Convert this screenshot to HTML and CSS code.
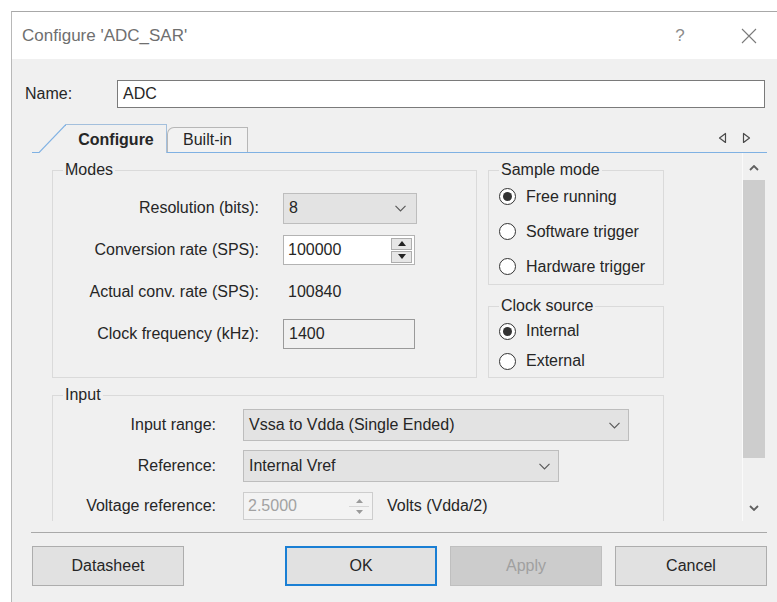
FILE: index.html
```html
<!DOCTYPE html>
<html lang="en">
<head>
<meta charset="utf-8">
<title>Configure 'ADC_SAR'</title>
<link rel="stylesheet" href="styles.css">
</head>
<body>
<div class="dialog">
  <header class="titlebar">
    <span class="title">Configure 'ADC_SAR'</span>
    <span class="help">?</span>
    <span class="close">
      <svg width="16" height="16" viewBox="0 0 16 16"><path d="M1 1 L15 15 M15 1 L1 15" stroke="#7a7a7a" stroke-width="1.1" fill="none"/></svg>
    </span>
  </header>

  <main class="panel">
    <div class="name-row">
      <span class="name-label">Name:</span>
      <div class="textbox name-box">ADC</div>
    </div>

    <div class="tabstrip">
      <div class="tab tab-active">
        <svg class="tab-slant" width="27" height="29" viewBox="0 0 27 29"><polygon points="0,29 27,0 27,29" fill="#f0f0f0"/><path d="M0 28.5 L27 0.5" stroke="#7fb1e3" stroke-width="1.2" fill="none"/></svg>
        <span class="tab-label">Configure</span>
      </div>
      <div class="tab tab-plain"><span class="tab-label">Built-in</span></div>
      <div class="tab-nav">
        <svg width="36" height="12" viewBox="0 0 36 12"><path d="M10.5 1.5 L10.5 10.5 L4.5 6 Z" stroke="#4a4a4a" stroke-width="1.2" fill="none" stroke-linejoin="round"/><path d="M28.5 1.5 L28.5 10.5 L34.5 6 Z" stroke="#4a4a4a" stroke-width="1.2" fill="none" stroke-linejoin="round"/></svg>
      </div>
    </div>

    <div class="pane">
      <div class="pane-content">
        <div class="groups">
          <fieldset class="group">
            <legend>Modes</legend>
            <div class="form modes-form">
              <span class="field-label">Resolution (bits):</span>
              <div class="combo combo-res"><span>8</span>
                <svg width="11" height="7" viewBox="0 0 11 7"><path d="M0.5 0.8 L5.5 5.8 L10.5 0.8" stroke="#5a5a5a" stroke-width="1.2" fill="none"/></svg>
              </div>

              <span class="field-label">Conversion rate (SPS):</span>
              <div class="spin spin-rate">
                <span class="spin-value">100000</span>
                <span class="spin-buttons">
                  <span class="spin-btn"><svg width="8" height="5" viewBox="0 0 8 5"><polygon points="0,5 8,5 4,0" fill="#222"/></svg></span>
                  <span class="spin-btn"><svg width="8" height="5" viewBox="0 0 8 5"><polygon points="0,0 8,0 4,5" fill="#222"/></svg></span>
                </span>
              </div>

              <span class="field-label">Actual conv. rate (SPS):</span>
              <span class="static-value">100840</span>

              <span class="field-label">Clock frequency (kHz):</span>
              <div class="textbox readonly-box">1400</div>
            </div>
          </fieldset>

          <div class="side">
            <fieldset class="group">
              <legend>Sample mode</legend>
              <div class="radios sample-radios">
                <div class="radio-row"><span class="radio checked"><span class="dot"></span></span>Free running</div>
                <div class="radio-row"><span class="radio"></span>Software trigger</div>
                <div class="radio-row"><span class="radio"></span>Hardware trigger</div>
              </div>
            </fieldset>
            <fieldset class="group">
              <legend>Clock source</legend>
              <div class="radios clock-radios">
                <div class="radio-row"><span class="radio checked"><span class="dot"></span></span>Internal</div>
                <div class="radio-row"><span class="radio"></span>External</div>
              </div>
            </fieldset>
          </div>

          <fieldset class="group group-wide">
            <legend>Input</legend>
            <div class="form input-form">
              <span class="field-label">Input range:</span>
              <div class="combo combo-range"><span>Vssa to Vdda (Single Ended)</span>
                <svg width="11" height="7" viewBox="0 0 11 7"><path d="M0.5 0.8 L5.5 5.8 L10.5 0.8" stroke="#5a5a5a" stroke-width="1.2" fill="none"/></svg>
              </div>

              <span class="field-label">Reference:</span>
              <div class="combo combo-ref"><span>Internal Vref</span>
                <svg width="11" height="7" viewBox="0 0 11 7"><path d="M0.5 0.8 L5.5 5.8 L10.5 0.8" stroke="#5a5a5a" stroke-width="1.2" fill="none"/></svg>
              </div>

              <span class="field-label">Voltage reference:</span>
              <div class="vref-row">
                <div class="spin spin-disabled">
                  <span class="spin-value">2.5000</span>
                  <span class="spin-buttons">
                    <span class="spin-btn"><svg width="7" height="4" viewBox="0 0 7 4"><polygon points="0,4 7,4 3.5,0" fill="#9a9a9a"/></svg></span>
                    <span class="spin-btn"><svg width="7" height="4" viewBox="0 0 7 4"><polygon points="0,0 7,0 3.5,4" fill="#9a9a9a"/></svg></span>
                  </span>
                </div>
                <span class="unit">Volts (Vdda/2)</span>
              </div>
            </div>
          </fieldset>
        </div>
      </div>

      <div class="scrollbar">
        <span class="sb-btn sb-up"><svg width="10" height="6" viewBox="0 0 10 6"><path d="M1 5 L5 1 L9 5" stroke="#606060" stroke-width="1.8" fill="none"/></svg></span>
        <span class="sb-thumb"></span>
        <span class="sb-track"></span>
        <span class="sb-btn sb-down"><svg width="10" height="6" viewBox="0 0 10 6"><path d="M1 1 L5 5 L9 1" stroke="#606060" stroke-width="1.8" fill="none"/></svg></span>
      </div>
    </div>

    <div class="separator"></div>

    <div class="buttons">
      <button class="btn btn-left">Datasheet</button>
      <button class="btn btn-default">OK</button>
      <button class="btn btn-disabled">Apply</button>
      <button class="btn">Cancel</button>
    </div>
  </main>
</div>
</body>
</html>
```

FILE: styles.css
```css
* { box-sizing: border-box; }

html, body { margin: 0; padding: 0; }

body {
  width: 777px;
  height: 602px;
  overflow: hidden;
  background: #ffffff;
  font-family: "Liberation Sans", Arial, sans-serif;
  font-size: 16px;
  color: #262626;
}

/* window frame */
.dialog {
  margin: 11px 0 0 11px;
  height: 591px;
  border-top: 1px solid #a8a8a8;
  border-left: 1px solid #b8b8b8;
  display: flex;
  flex-direction: column;
  overflow: hidden;
}

.titlebar {
  flex: none;
  height: 47px;
  background: #ffffff;
  display: flex;
  align-items: center;
  padding: 0 18px 0 10px;
}

.title { font-size: 17px; color: #6f6f6f; }

.help {
  margin-left: auto;
  width: 20px;
  text-align: center;
  font-size: 17px;
  color: #8c8c8c;
}

.close {
  margin-left: 49px;
  width: 20px;
  height: 20px;
  display: flex;
  align-items: center;
  justify-content: center;
}

.panel {
  flex: 1;
  background: #f0f0f0;
  display: flex;
  flex-direction: column;
}

/* name */
.name-row {
  margin: 21px 0 0 13px;
  display: flex;
  align-items: center;
  height: 28px;
}

.name-label { width: 92px; }

.textbox {
  height: 28px;
  border: 1px solid #7a7a7a;
  background: #ffffff;
  padding-left: 5px;
  line-height: 26px;
}

.name-box { width: 648px; }

/* tabs */
.tabstrip {
  margin: 16px 0 0 20px;
  width: 735px;
  height: 29px;
  display: flex;
  align-items: flex-end;
  border-bottom: 1px solid #7fb1e3;
  padding-left: 7px;
}

.tab { display: flex; }

.tab-active {
  height: 29px;
  margin-bottom: -1px;
}

.tab-slant { flex: none; display: block; }

.tab-active .tab-label {
  width: 101px;
  background: #f0f0f0;
  border-top: 1px solid #a3bfdc;
  border-right: 1px solid #a3bfdc;
  font-weight: bold;
  display: flex;
  align-items: center;
  justify-content: center;
  padding-top: 1px;
}

.tab-plain {
  width: 81px;
  height: 25px;
  border: 1px solid #b7b7b7;
  border-bottom: none;
  border-top-left-radius: 7px;
  background: #f2f2f2;
  align-items: center;
  justify-content: center;
}

.tab-nav {
  margin-left: auto;
  margin-right: 16px;
  align-self: center;
  display: flex;
}

/* scrolling page */
.pane {
  margin-left: 20px;
  width: 735px;
  height: 368px;
  display: flex;
}

.pane-content {
  flex: 1;
  overflow: hidden;
  padding: 8px 0 0 20px;
}

.groups {
  display: grid;
  grid-template-columns: 425px 176px;
  column-gap: 11px;
  row-gap: 8px;
  align-items: start;
}

.group-wide { grid-column: 1 / 3; }

.side {
  display: flex;
  flex-direction: column;
  gap: 12px;
}

fieldset.group {
  margin: 0;
  padding: 0;
  min-width: 0;
  border: 1px solid #dadada;
}

legend {
  margin-left: 10px;
  padding: 0 2px;
  line-height: 18px;
}

.form {
  display: grid;
  align-items: center;
  column-gap: 24px;
}

.field-label {
  justify-self: end;
  text-align: right;
  white-space: nowrap;
}

.modes-form {
  grid-template-columns: 206px 134px;
  grid-auto-rows: 42px;
  padding: 8px 0 22px 0;
}

.input-form {
  grid-template-columns: 163px auto;
  column-gap: 27px;
  grid-template-rows: 32px 32px 30px;
  row-gap: 9px;
  padding: 5px 0 12px 0;
  justify-items: start;
}

.input-form .field-label { justify-self: end; }

.combo {
  display: flex;
  align-items: center;
  justify-content: space-between;
  background: #e3e3e3;
  border: 1px solid #bdbdbd;
  padding: 0 10px 0 5px;
}

.combo svg { display: block; }

.combo-res { width: 134px; height: 31px; }
.combo-range { width: 386px; height: 32px; padding-right: 8px; }
.combo-ref { width: 316px; height: 32px; padding-right: 8px; }

.spin {
  display: flex;
  border: 1px solid #b3b3b3;
  background: #ffffff;
}

.spin-value {
  flex: 1;
  display: flex;
  align-items: center;
  padding-left: 4px;
}

.spin-buttons {
  display: flex;
  flex-direction: column;
  justify-content: center;
  gap: 1px;
  padding: 1px 2px 1px 1px;
}

.spin-btn {
  display: flex;
  align-items: center;
  justify-content: center;
}

.spin-rate { width: 132px; height: 30px; }

.spin-rate .spin-btn {
  width: 21px;
  height: 12px;
  background: #e6e6e6;
  border: 1px solid #adadad;
}

.spin-disabled {
  width: 130px;
  height: 28px;
  background: #f3f3f3;
  border-color: #cdcdcd;
  color: #a2a2a2;
}

.spin-disabled .spin-buttons { gap: 0; padding: 2px 3px 2px 0; }

.spin-disabled .spin-btn {
  width: 20px;
  height: 11px;
}

.spin-disabled .spin-btn + .spin-btn { border-top: 1px solid #d6d6d6; }

.static-value { padding-left: 5px; }

.readonly-box {
  width: 132px;
  height: 30px;
  line-height: 28px;
  background: #f0f0f0;
  border-color: #9a9a9a;
}

.vref-row {
  display: flex;
  align-items: center;
  gap: 14px;
}

/* radio groups */
.radios { display: flex; flex-direction: column; }

.sample-radios { padding: 0; }
.sample-radios .radio-row { height: 35px; }

.clock-radios { padding: 1px 0 1px 0; }
.clock-radios .radio-row { height: 30px; }

.radio-row {
  display: flex;
  align-items: center;
  padding-left: 10px;
  gap: 10px;
  white-space: nowrap;
}

.radio {
  flex: none;
  width: 17px;
  height: 17px;
  border: 1px solid #333333;
  border-radius: 50%;
  background: #ffffff;
  display: flex;
  align-items: center;
  justify-content: center;
}

.radio .dot {
  width: 9px;
  height: 9px;
  border-radius: 50%;
  background: #333333;
}

/* vertical scrollbar */
.scrollbar {
  flex: none;
  width: 25px;
  border-left: 1px solid #fafafa;
  background: #f0f0f0;
  display: flex;
  flex-direction: column;
}

.sb-btn {
  height: 26px;
  display: flex;
  align-items: center;
  justify-content: center;
  padding-right: 2px;
}

.sb-up { height: 27px; padding-top: 3px; }

.sb-thumb {
  height: 278px;
  width: 22px;
  background: #cdcdcd;
}

.sb-track { flex: 1; }

/* footer */
.separator {
  margin: 11px 0 0 19px;
  width: 736px;
  height: 1px;
  background: #a9a9a9;
}

.buttons {
  margin: 13px 0 0 20px;
  width: 735px;
  display: flex;
  gap: 13px;
}

.btn {
  width: 152px;
  height: 40px;
  border: 1px solid #adadad;
  background: #e1e1e1;
  font-family: inherit;
  font-size: 16px;
  color: #262626;
  padding: 0;
}

.btn-left { margin-right: auto; }

.btn-default { border: 2px solid #1a7fd4; }

.btn-disabled {
  background: #cccccc;
  border-color: #bfbfbf;
  color: #a0a0a0;
}
```
